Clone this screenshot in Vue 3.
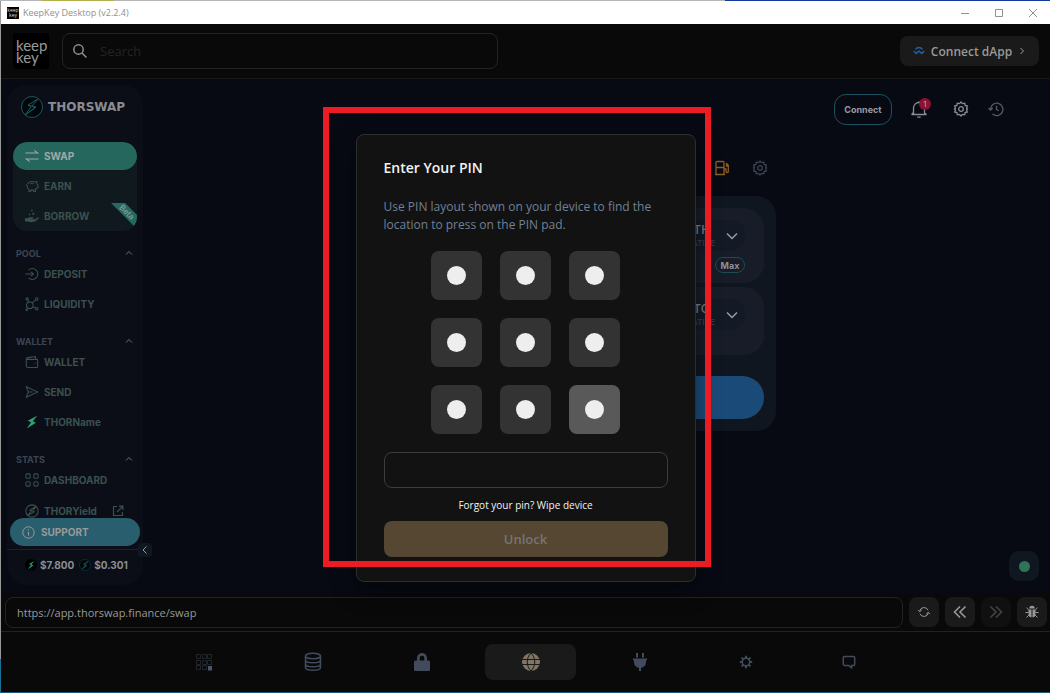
<script setup>
import { ref } from 'vue'

const search = ref('')
const pin = ref('')
const address = ref('https://app.thorswap.finance/swap')

const sections = [
  {
    title: 'POOL',
    items: [
      { label: 'DEPOSIT', icon: 'deposit' },
      { label: 'LIQUIDITY', icon: 'liquidity' },
    ],
  },
  {
    title: 'WALLET',
    items: [
      { label: 'WALLET', icon: 'wallet' },
      { label: 'SEND', icon: 'send' },
      { label: 'THORName', icon: 'bolt' },
    ],
  },
  {
    title: 'STATS',
    items: [
      { label: 'DASHBOARD', icon: 'dashboard' },
      { label: 'THORYield', icon: 'yield', external: true },
    ],
  },
]

const icons = {
  deposit: '<path d="M4 3.500A6.300 6.300 0 1 1 4 12.500M.5 8h9M7 5.500 9.500 8 7 10.500"/>',
  liquidity:
    '<circle cx="5.500" cy="9.500" r="3.800"/><circle cx="2.500" cy="2.300" r="1.300"/><circle cx="13.500" cy="2.300" r="1.400"/><circle cx="13.500" cy="13.500" r="1.400"/><circle cx="2" cy="14.500" r=".8"/><path d="M3 3.500l1.200 2.500M12.500 3.300 8 6.800M9 11l3.300 1.800"/>',
  wallet:
    '<path d="M2 5h11.500a1 1 0 0 1 1 1v7a1.200 1.200 0 0 1-1.200 1.200H3.200A1.700 1.700 0 0 1 1.500 12.500V4.500A2 2 0 0 1 3.300 3L12 1.800v3"/><path d="M11 9.500h1.200"/>',
  send: '<path d="M1.500 2 14.500 8 1.500 14 3.800 8zM3.800 8h5"/>',
  bolt: '<path fill="currentColor" stroke="none" d="M14 .8 3 6.500l4 1.700L2 15.500l10.500-6.700L9 7.200z"/>',
  dashboard:
    '<rect x="1" y="1" width="5" height="5" rx="1.500"/><rect x="10" y="1" width="5" height="5" rx="1.500"/><rect x="1" y="10" width="5" height="5" rx="1.500"/><rect x="10" y="10" width="5" height="5" rx="2"/>',
  yield: '<circle cx="8" cy="8" r="7"/><path d="M13 2.500 5.500 7l2 1-5 5.500 8-4.500-2-1z"/>',
}

const tokens = [
  { name: 'ETH', max: true },
  { name: 'BTC', max: false },
]
</script>

<template>
  <div class="window">
    <header class="titlebar">
      <span class="mini-logo">keep<br />key</span>
      <span class="app-title">KeepKey Desktop (v2.2.4)</span>
      <div class="window-buttons">
        <button aria-label="Minimize"><svg width="10" height="10" viewBox="0 0 10 10"><path d="M1 5.500h8" /></svg></button>
        <button aria-label="Maximize"><svg width="10" height="10" viewBox="0 0 10 10"><path d="M1.500 1.500h7v7h-7z" /></svg></button>
        <button aria-label="Close"><svg width="10" height="10" viewBox="0 0 10 10"><path d="M1 1l8 8M9 1 1 9" /></svg></button>
      </div>
    </header>

    <div class="header">
      <div class="brand">keep<br />key</div>
      <label class="search">
        <svg width="16" height="16" viewBox="0 0 16 16"><circle cx="6.500" cy="6.500" r="4.700" /><path d="M10 10l4.500 4.500" /></svg>
        <input v-model="search" type="text" placeholder="Search" aria-label="Search" />
      </label>
      <button class="dapp">
        <svg width="12" height="10" viewBox="0 0 12 10"><path d="M2.500 3.300C4.500.9 7.500.9 9.500 3.300M.700 5 3.300 7.500 6 5l2.700 2.500L11.300 5" /></svg>
        <span>Connect dApp</span>
        <svg class="chev" width="8" height="10" viewBox="0 0 8 10"><path d="M2.500 2 5.500 5l-3 3" /></svg>
      </button>
    </div>

    <main class="page">
      <aside class="sidebar">
        <div class="side-scroll">
          <div class="thor">
            <svg width="24" height="24" viewBox="0 0 24 24">
              <circle cx="12" cy="12" r="10.500" fill="#020508" />
              <path d="M18 4 8 10l3 2-6 8 10-7-3-2zM5 20l11-8M8 10l8 2" />
            </svg>
            <span>THORSWAP</span>
          </div>
          <nav class="group">
            <a href="#swap" class="row active">
              <svg width="14" height="14" viewBox="0 0 16 16"><path d="M.5 4.500h14l-4-3M15.500 11.500h-14l4 3" /></svg>SWAP
            </a>
            <a href="#earn" class="row">
              <svg width="14" height="14" viewBox="0 0 16 16"><path d="M3 6C4 3.500 6 2.800 8 2.800c1.500 0 2.500.2 3.500.8l2-.8v2.600L15 7.500v2.300l-1.800.8-1.200 1.200v2.400h-2v-1.500H6.500v1.500h-2V12C3 11 2.300 9.500 2.400 7.700L1 6.500M6 5.500c1.200-.6 2.500-.6 3.700 0M11.500 7.300v.5" /></svg>EARN
            </a>
            <a href="#borrow" class="row">
              <svg width="14" height="14" viewBox="0 0 16 16"><path fill="currentColor" stroke="none" d="M0 10.500h3l2-1h4l1 1.500H7v.7h4.500L15 9.500l1 .8-4 3.700-5 1.200-4-1H0zM7 .8h1.700v1.700H7zM9.500 4l1.500 1.500L9.500 7 8 5.500zM4.500 5.500H6V7H4.500z" /></svg>BORROW
            </a>
            <span class="ribbon"><span class="beta">Beta</span></span>
          </nav>
          <section v-for="s in sections" :key="s.title" class="section">
            <button class="section-head">
              <span>{{ s.title }}</span>
              <svg width="8" height="8" viewBox="0 0 8 8"><path d="M1 5.500 4 2.500l3 3" /></svg>
            </button>
            <a v-for="i in s.items" :key="i.label" :href="'#' + i.icon" class="row" :class="i.icon">
              <svg width="14" height="14" viewBox="0 0 16 16" v-html="icons[i.icon]"></svg>
              <span>{{ i.label }}</span>
              <svg v-if="i.external" class="ext" width="12" height="12" viewBox="0 0 12 12"><path d="M5 1.500H1.500v9h9V7M7 1.200h3.800V5M10.500 1.500 5 7" /></svg>
            </a>
          </section>
        </div>
        <button class="support">
          <svg width="13" height="13" viewBox="0 0 13 13"><circle cx="6.500" cy="6.500" r="5.700" /><path d="M6.500 6v3.500M6.500 3.300v1.200" /></svg>
          SUPPORT
        </button>
        <div class="prices">
          <svg width="12" height="12" viewBox="0 0 12 12"><circle cx="6" cy="6" r="6" fill="#000" /><path fill="#1e9c76" d="M9.500 2 4 5l2 1-3.500 4.500L8.500 6.500l-2-1z" /></svg>
          <span>$7.800</span>
          <svg width="12" height="12" viewBox="0 0 12 12"><circle cx="6" cy="6" r="5.500" fill="#020508" stroke="#0d2c34" /><path fill="none" stroke="#174a53" d="M9 2.500 4.500 5l2 1L3 10l5-3.500-2-1z" /></svg>
          <span>$0.301</span>
        </div>
        <button class="collapse" aria-label="Collapse sidebar"><svg width="8" height="10" viewBox="0 0 8 10"><path d="M5.500 1.500 2 5l3.500 3.500" /></svg></button>
      </aside>

      <div class="content">
        <div class="tools">
          <button class="connect">Connect</button>
          <button class="tool bell" aria-label="Notifications">
            <svg width="18" height="20" viewBox="0 0 18 20"><path d="M1.500 15.500h15M3.500 15V9a5.500 5.500 0 0 1 11 0v5l2 1.500M3.500 13.500 1.500 15.500M9 3.500V2M7.300 18.200h3.400" /></svg>
            <span class="count">1</span>
          </button>
          <button class="tool" aria-label="Settings">
            <svg width="16" height="16" viewBox="0 0 16 16"><path d="M6.500 2.600 8 1l1.500 1.600 2.200-.4.400 2.200L14.300 5l-.7 2.200.9.800-.9.900.7 2.100-2.200.6-.4 2.200-2.200-.4L8 15l-1.500-1.600-2.200.4-.4-2.200-2.200-.6.700-2.100L1.500 8l.9-.8L1.700 5l2.200-.6.400-2.200z" /><circle cx="8" cy="8" r="2.300" /></svg>
          </button>
          <button class="tool dim" aria-label="History">
            <svg width="16" height="16" viewBox="0 0 16 16"><path d="M2.500 8.500A6.200 6.200 0 1 1 4.500 13M.500 7l2 2 2.200-2M8.500 4.800V8.500l2.200 1.300" /></svg>
          </button>
        </div>

        <div class="swap">
          <div class="swap-tools">
            <button class="gas" aria-label="Gas price">
              <svg width="16" height="16" viewBox="0 0 16 16"><path d="M1 14.500h10M2 14.500V2.500A1 1 0 0 1 3 1.500h6a1 1 0 0 1 1 1v12M2 7.500h8M12 3l2.300 2.300v6.500a1.200 1.200 0 0 1-2.300 0V9H10M12.500 4v2h1.800" /></svg>
            </button>
            <button aria-label="Swap settings">
              <svg width="16" height="16" viewBox="0 0 16 16"><path d="M6.500 2.600 8 1l1.500 1.600 2.200-.4.400 2.200L14.300 5l-.7 2.200.9.800-.9.900.7 2.100-2.200.6-.4 2.200-2.200-.4L8 15l-1.500-1.600-2.200.4-.4-2.200-2.200-.6.700-2.100L1.500 8l.9-.8L1.700 5l2.200-.6.400-2.200z" /><circle cx="8" cy="8" r="2.300" /></svg>
            </button>
          </div>
          <div class="card">
            <div v-for="t in tokens" :key="t.name" class="asset">
              <button class="token">
                <span class="names"><b>{{ t.name }}</b><small>NATIVE</small></span>
                <svg width="12" height="8" viewBox="0 0 12 8"><path d="M1 1.500 6 6.500l5-5" /></svg>
              </button>
              <button v-if="t.max" class="max">Max</button>
            </div>
            <button class="submit" aria-label="Swap"></button>
          </div>
        </div>
        <button class="status" aria-label="Network status"><i></i></button>
      </div>
    </main>

    <div class="urlbar">
      <input v-model="address" type="text" aria-label="Address" />
      <button aria-label="Reload"><svg width="14" height="14" viewBox="0 0 14 14"><path d="M2.800 6A4.300 4.300 0 0 1 11 5.200M11.200 8A4.300 4.300 0 0 1 3 8.800M1 5l1.700 1.700L4.700 5M13 9l-1.700-1.700L9.300 9" /></svg></button>
      <button aria-label="Back"><svg class="bold" width="16" height="16" viewBox="0 0 16 16"><path d="M8 2.500 2.500 8 8 13.500M13.500 2.500 8 8l5.500 5.500" /></svg></button>
      <button aria-label="Forward" class="off"><svg class="bold" width="16" height="16" viewBox="0 0 16 16"><path d="M8 2.500 13.500 8 8 13.500M2.500 2.500 8 8l-5.500 5.500" /></svg></button>
      <button aria-label="Debug">
        <svg width="14" height="14" viewBox="0 0 14 14"><path fill="currentColor" stroke="none" d="M4.300 3.500a2.700 2.700 0 0 1 5.400 0zM3.500 4.500h3v8C4.500 12.200 3.500 11 3.500 9zM7.500 4.500h3V9c0 2-1 3.200-3 3.500z" /><path d="M1.500 2.800 3.800 5M12.500 2.800 10.200 5M.5 7.500h3M10.500 7.500h3M1.500 12.500 4 10M12.500 12.500 10 10" /></svg>
      </button>
    </div>

    <nav class="bottom">
      <button aria-label="PIN grid" class="faint">
        <svg width="18" height="18" viewBox="0 0 18 18"><path d="M1.500 1.500h4v4h-4zM7.500 1.500h4v4h-4zM12.500 1.500h4v4h-4zM1.500 7.500h4v4h-4zM7.500 7.500h4v4h-4zM12.500 7.500h4v4h-4zM1.500 12.500h4v4h-4zM7.500 12.500h4v4h-4z" /><path fill="#4a5568" stroke="none" d="M13 13h4v4.500h-4z" /></svg>
      </button>
      <button aria-label="Storage" class="storage">
        <svg width="18" height="20" viewBox="0 0 18 20"><ellipse cx="9" cy="4" rx="7.500" ry="2.800" /><path d="M1.500 4v11.500c0 3.700 15 3.700 15 0V4M1.500 8c0 3.700 15 3.700 15 0M1.500 12c0 3.700 15 3.700 15 0" /></svg>
      </button>
      <button aria-label="Lock">
        <svg width="18" height="20" viewBox="0 0 18 20"><path fill="currentColor" stroke="none" d="M4 8.500V6a5 5 0 0 1 10 0v2.500h1.500a1.500 1.500 0 0 1 1.500 1.500v7.500a1.500 1.500 0 0 1-1.500 1.500h-13A1.500 1.500 0 0 1 1 17.500V10a1.500 1.500 0 0 1 1.500-1.500zm2.700 0h4.600V6a2.300 2.300 0 0 0-4.600 0z" /></svg>
      </button>
      <button aria-label="Browser" class="on">
        <svg width="18" height="18" viewBox="0 0 18 18"><circle cx="9" cy="9" r="9" fill="currentColor" stroke="none" /><path stroke="#1a1a1a" d="M0 6.500h18M0 11.500h18M9 0c-5 5-5 13 0 18M9 0c5 5 5 13 0 18" /></svg>
      </button>
      <button aria-label="Connections">
        <svg width="14" height="18" viewBox="0 0 14 18"><path fill="currentColor" stroke="none" d="M3 0h2v4.500H3zM9 0h2v4.500H9zM0 5.500h14V7.500h-1v2a6 6 0 0 1-5 5.300V18H6v-3.200A6 6 0 0 1 1 9.500v-2H0z" /></svg>
      </button>
      <button aria-label="Settings" class="small">
        <svg width="14" height="14" viewBox="0 0 14 14"><circle cx="7" cy="7" r="3.700" /><path stroke-width="2" d="M7 .8v2.500M7 10.700v2.500M.8 7h2.500M10.700 7h2.500M2.600 2.600l1.700 1.700M9.700 9.700l1.700 1.700M2.600 11.400l1.700-1.700M9.700 4.300l1.700-1.700" /></svg>
      </button>
      <button aria-label="Chat" class="small">
        <svg width="14" height="14" viewBox="0 0 14 14"><path stroke-width="1.500" d="M2.500 1.500h9a1.200 1.200 0 0 1 1.200 1.200v6.600a1.200 1.200 0 0 1-1.200 1.200H9.500v2.300L6.500 10.500h-4A1.200 1.200 0 0 1 1.300 9.300V2.700A1.200 1.200 0 0 1 2.500 1.500z" /></svg>
      </button>
    </nav>

    <div class="overlay">
      <form class="modal" role="dialog" aria-labelledby="pin-title" @submit.prevent>
        <h1 id="pin-title">Enter Your PIN</h1>
        <p>Use PIN layout shown on your device to find the location to press on the PIN pad.</p>
        <div class="pad">
          <button v-for="n in 9" :key="n" type="button" :class="{ hover: n === 9 }" :aria-label="'Position ' + n"><i></i></button>
        </div>
        <input v-model="pin" type="password" aria-label="PIN" />
        <a href="#wipe">Forgot your pin? Wipe device</a>
        <button type="submit" class="unlock" disabled>Unlock</button>
        <div class="frame"></div>
      </form>
    </div>
  </div>
</template>

<style>
body { background: #090909; }
</style>

<style scoped>
* { box-sizing: border-box; }
.window {
  position: relative;
  display: flex;
  flex-direction: column;
  min-height: 100vh;
  padding: 1px 0 1px 1px;
  font-family: "Open Sans", "Noto Sans", sans-serif;
  background:
    linear-gradient(#1b5578, #1b5578) bottom / 100% 1px no-repeat,
    linear-gradient(90deg, #b5b5b5 42px, #b5b04c 42px 114px, #b5b5b5 114px 725px, #123a9c 725px) top / 100% 1px no-repeat,
    linear-gradient(#999 659px, #1b6f95 659px) left / 1px 100% no-repeat,
    #090909;
}
button { padding: 0; border: 0; background: none; color: inherit; font: inherit; display: flex; align-items: center; justify-content: center; }
a { color: inherit; text-decoration: none; }
svg { fill: none; stroke: currentColor; flex: none; }
input { min-width: 0; font: inherit; outline: 0; }

.titlebar { display: flex; align-items: center; height: 23px; padding: 0 7px 0 6px; background: #fff; color: #909090; }
.mini-logo { width: 12px; height: 12px; padding-top: 1px; background: #000; color: #ddd; font-size: 5px; line-height: 5px; text-align: center; }
.app-title { margin-left: 4px; font-size: 9px; }
.window-buttons { display: flex; gap: 14px; margin-left: auto; }
.window-buttons button { width: 20px; height: 20px; }

.header { display: flex; align-items: center; height: 55px; padding: 0 11px 0 12px; border-bottom: 1px solid #191919; }
.brand { width: 36px; height: 36px; padding: 6px 0 0 3px; border-radius: 3px; background: #000; color: #999; font-family: Lato, sans-serif; font-weight: 400; font-size: 15px; line-height: 12px; }
.search { display: flex; align-items: center; flex: 0 1 436px; height: 36px; margin-left: 13px; padding: 0 9px; border: 1px solid #242424; border-radius: 8px; color: #8a8f98; }
.search svg { stroke-width: 1.500; }
.search input { flex: 1; margin-left: 10px; border: 0; background: none; color: #999; font-size: 13px; }
.search input::placeholder { color: #242424; }
.dapp { width: 139px; height: 30px; margin-left: auto; gap: 6px; border-radius: 8px; background: #1a1a1a; color: #999; font-size: 12px; font-weight: 600; }
.dapp svg:first-child { stroke: #265f9f; stroke-width: 1.500; }

.page { display: flex; flex: 1; padding: 6px 0 8px 6px; background: #070a13; }
.sidebar { position: relative; display: flex; flex-direction: column; width: 136px; flex: none; border-radius: 20px; background: #0b0e17; font-family: Inter, "Open Sans", sans-serif; font-size: 10px; font-weight: 700; color: #3b514f; }
.side-scroll { flex: 1; padding: 10px 6px 0; }
.thor { display: flex; align-items: center; gap: 4px; height: 24px; padding-left: 7px; color: #8a8c90; font-family: "DejaVu Sans", sans-serif; font-size: 12px; }
.thor svg { stroke: #175861; }
.group { position: relative; display: flex; flex-direction: column; gap: 2px; margin: 23px 0 0; padding-bottom: 1px; border-radius: 14px; background: #0f191e; overflow: hidden; }
.row { display: flex; align-items: center; gap: 5px; height: 30px; padding-left: 12px; }
.row svg { stroke-width: 1.200; }
.group .row { height: 28px; }
.row.active { border-radius: 14px; background: #25675d; color: #a3a8a8; }
.ribbon { position: absolute; right: 0; top: 61px; width: 26px; height: 25px; overflow: hidden; }
.beta { position: absolute; left: -8px; top: 4px; width: 48px; height: 10px; background: #246a60; color: #8f9c9b; font-size: 8px; font-weight: 500; line-height: 10px; text-align: center; transform: rotate(45deg); }
.section { margin-top: 16px; }
.section-head { justify-content: space-between; width: 100%; height: 12px; padding: 0 4px 0 3px; color: #3d4555; font-size: 9px; }
.section-head svg { stroke: #6a6f78; }
.row.bolt svg { color: #2fa075; }
.row.yield { height: 24px; padding-top: 7px; }
.row .ext { margin-left: 10px; }
.support { position: absolute; left: 3px; right: 3px; bottom: 39px; height: 28px; gap: 6px; padding-left: 12px; justify-content: flex-start; border-radius: 14px; background: #285e6e; color: #9a9a9a; }
.prices { display: flex; align-items: center; gap: 3px; height: 36px; padding: 0 18px 5px; border-top: 1px solid #1d212b; color: #8b8d92; }
.prices svg { stroke: none; }
.prices span + svg { margin-left: 2px; }
.collapse { position: absolute; right: -9px; bottom: 28px; width: 14px; height: 14px; border-radius: 4px; background: #111720; color: #999; }

.content { position: relative; flex: 1; min-width: 0; }
.tools { display: flex; justify-content: flex-end; align-items: center; height: 48px; padding-right: 45px; font-family: Inter, sans-serif; color: #8a8d93; }
.tools svg { stroke-width: 1.300; }
.connect { width: 58px; height: 31px; margin-right: 18px; border: 1px solid #1d5360; border-radius: 12px; font-size: 9px; font-weight: 700; color: #999ca2; }
.tool { position: relative; width: 18px; height: 20px; margin-right: 24px; }
.tool + .tool { margin-right: 17px; }
.tool.dim { margin-right: 0; color: #565a63; }
.count { position: absolute; left: 9px; top: -1px; width: 12px; height: 12px; border-radius: 6px; background: #8b1230; color: #aaa; font-size: 8px; line-height: 12px; }
.swap { width: 359px; margin: 24px auto 0; }
.swap-tools { display: flex; justify-content: flex-end; gap: 22px; height: 22px; padding-right: 8px; color: #3b4350; }
.swap-tools .gas { color: #8d5c25; }
.swap-tools svg { stroke-width: 1.300; }
.card { display: flex; flex-direction: column; gap: 4px; margin-top: 17px; padding: 12px; border-radius: 20px; background: #101620; font-family: Inter, sans-serif; }
.asset { display: flex; flex-direction: column; align-items: flex-end; gap: 6px; min-height: 68px; padding: 12px 19px 10px; border-radius: 20px; background: #171c28; }
.token { width: 92px; height: 31px; padding-right: 7px; gap: 11px; justify-content: flex-end; border-radius: 14px; background: #131a25; color: #9a9da3; }
.token svg { stroke-width: 1.500; }
.names { display: flex; flex-direction: column; text-align: left; }
.names b { font-size: 12px; line-height: 14px; font-weight: 500; color: #777b82; }
.names small { font-size: 8px; line-height: 12px; font-weight: 500; color: #38404b; }
.max { width: 30px; height: 16px; border: 1px solid #1d4d50; border-radius: 8px; font-size: 9px; font-weight: 700; color: #8d9096; }
.submit { height: 43px; margin-top: 17px; border-radius: 22px; background: #1a4b78; }
.status { position: absolute; right: 11px; bottom: 4px; width: 30px; height: 30px; border-radius: 10px; background: #101721; }
.status i { width: 11px; height: 11px; border-radius: 50%; background: #2f7454; }

.urlbar { display: flex; align-items: center; gap: 6px; height: 39px; padding: 0 3px 0 4px; border-bottom: 1px solid #222; }
.urlbar input { flex: 1; height: 31px; padding: 0 11px; border: 1px solid #222; border-radius: 8px; background: #090909; color: #999; font-size: 11px; }
.urlbar button { width: 30px; height: 30px; border-radius: 8px; background: #1a1a1a; color: #999; }
.urlbar .off { background: #101010; color: #444; }
.bold { stroke-width: 1.600; }

.bottom { display: flex; align-items: center; justify-content: center; gap: 18px; height: 60px; padding-right: 2px; color: #414b5c; }
.bottom button { width: 91px; height: 36px; border-radius: 8px; }
.bottom .storage svg { stroke-width: 1.500; }
.bottom .small { width: 85px; }
.bottom .small svg { stroke-width: 1.500; }
.bottom .faint svg { stroke: #20242b; }
.bottom .on { background: #1a1a1a; color: #817563; }

.overlay { position: absolute; inset: 0; display: flex; justify-content: center; align-items: flex-start; padding: 134px 0 0 1px; }
.modal { position: relative; display: flex; flex-direction: column; width: 340px; padding: 23px 27px 24px; border: 1px solid #2e2e2e; border-radius: 8px; background: #121212; box-shadow: 0 8px 24px rgba(0, 0, 0, 0.4); }
h1 { margin: 0; font-size: 14px; line-height: 20px; font-weight: 600; color: #f2f2f2; }
p { margin: 20px 0 17px; font-size: 12px; line-height: 18px; color: #718096; }
.pad { display: grid; grid-template-columns: repeat(3, 51px); gap: 18px; justify-content: center; }
.pad button { height: 49px; border-radius: 8px; background: #333; }
.pad .hover { background: #595959; }
.pad i { width: 19px; height: 19px; border-radius: 50%; background: #eee; }
.modal input { height: 36px; margin-top: 18px; padding: 0 14px; border: 1px solid #3c3c3c; border-radius: 8px; background: transparent; color: #eee; font-size: 14px; }
.modal a { align-self: center; margin: 8px 0 7px; font-size: 10px; line-height: 18px; color: #f2f2f2; }
.unlock { height: 36px; border-radius: 8px; background: #554732; color: #757575; font-size: 13px; font-weight: 600; }
.frame { position: absolute; inset: -28px -16px 14px -34px; border: 6px solid #ed1c24; pointer-events: none; }
</style>
